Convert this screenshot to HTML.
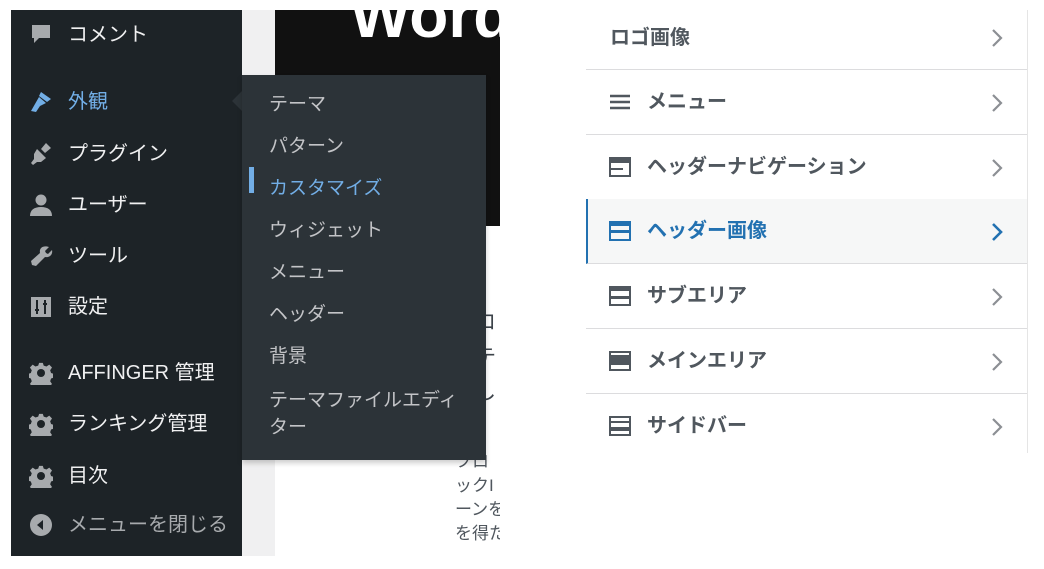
<!DOCTYPE html>
<html><head><meta charset="utf-8"><style>
*{margin:0;padding:0;box-sizing:border-box}
body{width:1044px;height:569px;background:#fff;position:relative;overflow:hidden;font-family:"Liberation Sans","Noto Sans CJK JP",sans-serif}
.a{position:absolute}
.side{left:11px;top:10px;width:231px;height:546px;background:#1d2327}
.mi{position:absolute;left:57px;font-size:20px;color:#f0f0f1;line-height:24px;white-space:nowrap}
.ic{position:absolute;left:18px;width:24px;height:24px}
.sub{left:242px;top:75px;width:244px;height:385px;background:#2c3338;box-shadow:0 3px 5px rgba(0,0,0,.2)}
.si{position:absolute;left:27px;font-size:19px;color:#c3c4c7;line-height:22px;white-space:nowrap}
.row{position:absolute;left:586px;width:441px;height:65px;border-bottom:1.5px solid #dcdcde;background:#fff}
.rt{position:absolute;left:61px;top:20px;font-size:20px;font-weight:bold;color:#50575e;white-space:nowrap;line-height:24px}
.ri{position:absolute;left:23px;top:22px;width:22px;height:20px}
.ch{position:absolute;left:404px;top:22px}
</style></head><body>
<div class="a side">
  <svg class="ic" style="top:13px" viewBox="0 0 24 24"><path d="M3 2h18v13H10l-5 5v-5H3z" fill="#a7aaad"/></svg>
  <div class="mi" style="top:13px">コメント</div>
  <svg class="ic" style="top:80px" viewBox="0 0 24 24"><path d="M12 2l10 7-4 3-8-6z M10 7l7 6-6 3-4 6-5-1 4-7z" fill="#72aee6"/></svg>
  <div class="mi" style="top:80px;color:#72aee6">外観</div>
  <div class="a" style="left:221px;top:81px;border:10px solid transparent;border-right-color:#2c3338;border-left:0"></div>
  <svg class="ic" style="top:132px" viewBox="0 0 24 24"><path d="M17 1l-5 6 4 4 6-5z M8 7l9 9-5 4H8l-4 3-2-2 3-4v-5z" fill="#a7aaad"/></svg>
  <div class="mi" style="top:132px">プラグイン</div>
  <svg class="ic" style="top:183px" viewBox="0 0 24 24"><circle cx="12" cy="7" r="5.5" fill="#a7aaad"/><path d="M1 23c0-6 4-9 11-9s11 3 11 9z" fill="#a7aaad"/></svg>
  <div class="mi" style="top:183px">ユーザー</div>
  <svg class="ic" style="top:234px" viewBox="0 0 24 24"><path d="M20 3l-4 4 1 2 2 1 4-4c1 4-2 8-7 7L7 22l-4-1-1-4 9-8c-1-5 3-8 9-6z" fill="#a7aaad"/></svg>
  <div class="mi" style="top:234px">ツール</div>
  <svg class="ic" style="top:285px" viewBox="0 0 24 24"><rect x="2" y="2" width="20" height="20" fill="#a7aaad"/><path d="M8 5v14M6 15h4M16 5v14M14 9h4" stroke="#1d2327" stroke-width="2"/></svg>
  <div class="mi" style="top:285px">設定</div>
  <svg class="ic" style="top:351px" viewBox="0 0 24 24"><path d="M10 1h4l1 3 3 1 3-2 3 3-2 3 1 3 3 1v4l-3 1-1 3 2 3-3 3-3-2-3 1-1 3h-4l-1-3-3-1-3 2-3-3 2-3-1-3-3-1v-4l3-1 1-3-2-3 3-3 3 2 3-1z" fill="#a7aaad" transform="scale(.92) translate(1 1)"/><circle cx="12" cy="12" r="4" fill="#1d2327"/></svg>
  <div class="mi" style="top:351px">AFFINGER 管理</div>
  <svg class="ic" style="top:402px" viewBox="0 0 24 24"><path d="M10 1h4l1 3 3 1 3-2 3 3-2 3 1 3 3 1v4l-3 1-1 3 2 3-3 3-3-2-3 1-1 3h-4l-1-3-3-1-3 2-3-3 2-3-1-3-3-1v-4l3-1 1-3-2-3 3-3 3 2 3-1z" fill="#a7aaad" transform="scale(.92) translate(1 1)"/><circle cx="12" cy="12" r="4" fill="#1d2327"/></svg>
  <div class="mi" style="top:402px">ランキング管理</div>
  <svg class="ic" style="top:454px" viewBox="0 0 24 24"><path d="M10 1h4l1 3 3 1 3-2 3 3-2 3 1 3 3 1v4l-3 1-1 3 2 3-3 3-3-2-3 1-1 3h-4l-1-3-3-1-3 2-3-3 2-3-1-3-3-1v-4l3-1 1-3-2-3 3-3 3 2 3-1z" fill="#a7aaad" transform="scale(.92) translate(1 1)"/><circle cx="12" cy="12" r="4" fill="#1d2327"/></svg>
  <div class="mi" style="top:454px">目次</div>
  <svg class="ic" style="top:503px" viewBox="0 0 24 24"><circle cx="12" cy="12" r="11" fill="#a7aaad"/><path d="M14 7v10l-6-5z" fill="#1d2327"/></svg>
  <div class="mi" style="top:503px;color:#a7aaad">メニューを閉じる</div>
</div>
<div class="a" style="left:242px;top:10px;width:33px;height:546px;background:#f0f0f1"></div>
<div class="a" style="left:275px;top:10px;width:225px;height:216px;background:#111;overflow:hidden">
  <div class="a" style="left:75px;top:-30px;font-size:64px;color:#fff;font-weight:bold;line-height:70px">Word</div>
</div>
<div class="a" style="left:475px;top:305px;font-size:21px;color:#3c434a;line-height:35px;width:25px;overflow:hidden">ロ<br>テ<br>し</div>
<div class="a" style="left:455px;top:450px;font-size:17px;color:#50575e;line-height:24px;width:45px;overflow:hidden;white-space:nowrap">フロ<br>ックI<br>ーンを<br>を得た</div>
<div class="a sub">
  <div class="si" style="top:19px">テーマ</div>
  <div class="si" style="top:61px">パターン</div>
  <div class="a" style="left:7px;top:92px;width:5px;height:26px;background:#72aee6"></div>
  <div class="si" style="top:103px;color:#72aee6">カスタマイズ</div>
  <div class="si" style="top:145px">ウィジェット</div>
  <div class="si" style="top:187px">メニュー</div>
  <div class="si" style="top:229px">ヘッダー</div>
  <div class="si" style="top:271px">背景</div>
  <div class="si" style="top:312px;line-height:27px">テーマファイルエディ<br>ター</div>
</div>
<div class="a" style="left:1026px;top:10px;width:2px;height:443px;background:#e5e5e5"></div>
<div class="row" style="top:5px"><div class="rt" style="left:24px;top:21px">ロゴ画像</div><svg class="ch" width="14" height="22" viewBox="0 0 14 22"><path d="M3 3l8 8-8 8" stroke="#8c8f94" stroke-width="2.2" fill="none"/></svg></div>
<div class="row" style="top:70px"><svg class="ri" viewBox="0 0 22 20"><path d="M1 4h20M1 10h20M1 16h20" stroke="#50575e" stroke-width="2.4"/></svg><div class="rt">メニュー</div><svg class="ch" width="14" height="22" viewBox="0 0 14 22"><path d="M3 3l8 8-8 8" stroke="#8c8f94" stroke-width="2.2" fill="none"/></svg></div>
<div class="row" style="top:135px"><svg class="ri" viewBox="0 0 22 20"><rect x="1" y="1" width="20" height="18" fill="none" stroke="#50575e" stroke-width="2"/><rect x="1" y="1" width="20" height="5" fill="#50575e"/><rect x="1" y="11" width="13" height="2" fill="#50575e"/></svg><div class="rt">ヘッダーナビゲーション</div><svg class="ch" width="14" height="22" viewBox="0 0 14 22"><path d="M3 3l8 8-8 8" stroke="#8c8f94" stroke-width="2.2" fill="none"/></svg></div>
<div class="row" style="top:199px;background:#f6f7f7;border-left:2px solid #2271b1"><svg class="ri" style="left:21px" viewBox="0 0 22 20"><rect x="1" y="1" width="20" height="18" fill="none" stroke="#2271b1" stroke-width="2"/><rect x="1" y="1" width="20" height="4" fill="#2271b1"/><rect x="1" y="9" width="20" height="3" fill="#2271b1"/></svg><div class="rt" style="color:#2271b1;left:59px">ヘッダー画像</div><svg class="ch" style="left:402px" width="14" height="22" viewBox="0 0 14 22"><path d="M3 3l8 8-8 8" stroke="#2271b1" stroke-width="2.6" fill="none"/></svg></div>
<div class="row" style="top:264px"><svg class="ri" viewBox="0 0 22 20"><rect x="1" y="1" width="20" height="18" fill="none" stroke="#50575e" stroke-width="2"/><rect x="1" y="1" width="20" height="4" fill="#50575e"/><rect x="1" y="10" width="20" height="3" fill="#50575e"/></svg><div class="rt">サブエリア</div><svg class="ch" width="14" height="22" viewBox="0 0 14 22"><path d="M3 3l8 8-8 8" stroke="#8c8f94" stroke-width="2.2" fill="none"/></svg></div>
<div class="row" style="top:329px"><svg class="ri" viewBox="0 0 22 20"><rect x="1" y="1" width="20" height="18" fill="none" stroke="#50575e" stroke-width="2"/><rect x="1" y="4" width="20" height="10" fill="#50575e"/></svg><div class="rt">メインエリア</div><svg class="ch" width="14" height="22" viewBox="0 0 14 22"><path d="M3 3l8 8-8 8" stroke="#8c8f94" stroke-width="2.2" fill="none"/></svg></div>
<div class="row" style="top:394px;border-bottom:none;height:59px"><svg class="ri" viewBox="0 0 22 20"><rect x="1" y="1" width="20" height="18" fill="none" stroke="#50575e" stroke-width="2"/><rect x="1" y="5" width="20" height="2" fill="#50575e"/><rect x="1" y="11" width="20" height="4" fill="#50575e"/></svg><div class="rt">サイドバー</div><svg class="ch" width="14" height="22" viewBox="0 0 14 22"><path d="M3 3l8 8-8 8" stroke="#8c8f94" stroke-width="2.2" fill="none"/></svg></div>
</body></html>
